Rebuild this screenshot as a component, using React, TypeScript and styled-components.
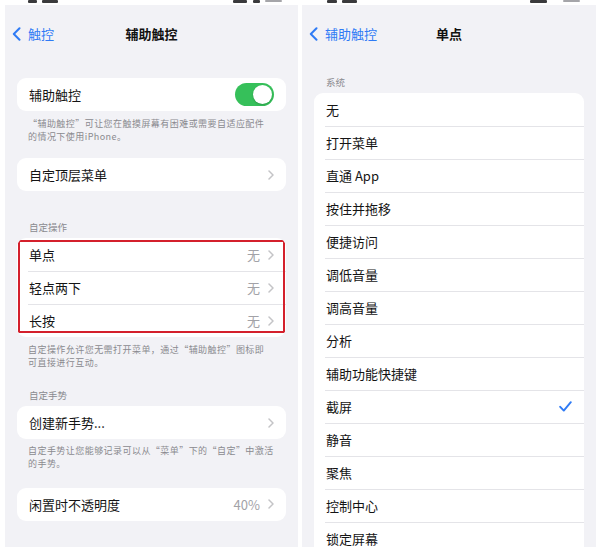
import React from 'react';
import styled, { createGlobalStyle } from 'styled-components';

const Global = createGlobalStyle`
  html, body { margin: 0; padding: 0; background: #ffffff; }
  body { font-family: "Noto Sans CJK SC", "Noto Sans", sans-serif; -webkit-font-smoothing: antialiased; }
`;

const BLUE = '#2f7bf5';

const Page = styled.div`
  width: 600px;
  height: 551px;
  box-sizing: border-box;
  padding-left: 5px;
  display: flex;
  gap: 4px;
  overflow: hidden;
`;

const Column = styled.div<{ $w: number }>`
  width: ${(p) => p.$w}px;
  height: 547px;
  display: flex;
  flex-direction: column;
`;

const StatusStrip = styled.div`
  height: 5px;
  flex: none;
  display: flex;
  align-items: flex-start;
  overflow: hidden;
`;

const Mark = styled.span<{ $ml: number; $w: number; $h?: number; $light?: boolean }>`
  display: block;
  margin-left: ${(p) => p.$ml}px;
  width: ${(p) => p.$w}px;
  height: ${(p) => p.$h ?? 2.5}px;
  border-radius: 1px;
  background: ${(p) => (p.$light ? '#a5a5a9' : '#3a3a3c')};
`;

const Panel = styled.div`
  flex: 1;
  background: #f2f2f6;
  display: flex;
  flex-direction: column;
  overflow: hidden;
`;

const NavBar = styled.div`
  height: 58px;
  flex: none;
  display: grid;
  grid-template-columns: 1fr auto 1fr;
  align-items: center;
  padding: 0 7px;
`;

const Back = styled.div`
  display: flex;
  align-items: center;
  gap: 7px;
  color: ${BLUE};
  font-size: 13px;
  line-height: 16px;
`;

const Title = styled.div`
  font-size: 13px;
  font-weight: 700;
  color: #111;
  line-height: 16px;
`;

const Body = styled.div`
  padding: 0 12px;
  display: flex;
  flex-direction: column;
`;

const SectionHeader = styled.div<{ $mt: number }>`
  margin-top: ${(p) => p.$mt}px;
  margin-bottom: 5px;
  padding-left: 12px;
  font-size: 9.5px;
  line-height: 12px;
  color: #8a8a8f;
`;

const Card = styled.div<{ $mt?: number; $highlight?: boolean }>`
  position: relative;
  margin-top: ${(p) => p.$mt ?? 0}px;
  background: #ffffff;
  border-radius: 9px;
  overflow: hidden;
  ${(p) =>
    p.$highlight &&
    `
    &::after {
      content: '';
      position: absolute;
      top: 2px; left: 1px; right: 1px; bottom: 4px;
      border: 2px solid #d4202c;
      border-radius: 1px;
      pointer-events: none;
    }
  `}
`;

const Row = styled.div`
  position: relative;
  height: 33px;
  display: flex;
  align-items: center;
  padding: 0 12px 0 12px;
  font-size: 13px;
  color: #141414;
  & + &::before {
    content: '';
    position: absolute;
    top: 0;
    left: 11px;
    right: 0;
    height: 1px;
    background: #e4e4e8;
  }
`;

const Label = styled.span`
  flex: 1;
  white-space: nowrap;
`;

const Value = styled.span`
  color: #a2a2a7;
  font-size: 13px;
  margin-right: 8px;
`;

const Footer = styled.div<{ $pt?: number }>`
  padding: ${(p) => p.$pt ?? 6}px 8px 0 11px;
  display: flex;
  flex-direction: column;
  color: #8a8a8f;
`;

const FooterLine = styled.span`
  display: block;
  font-size: 9px;
  letter-spacing: 0.45px;
  line-height: 13.1px;
  white-space: nowrap;
`;

const Toggle = styled.div`
  width: 39px;
  height: 23px;
  border-radius: 12px;
  background: #36c05a;
  display: flex;
  align-items: center;
  justify-content: flex-end;
  padding: 0 2px;
  box-sizing: border-box;
`;

const Knob = styled.div`
  width: 19px;
  height: 19px;
  border-radius: 50%;
  background: #fff;
  box-shadow: 0 1px 2px rgba(0, 0, 0, 0.2);
`;

const Chevron = () => (
  <svg width="6" height="10" viewBox="0 0 6 10" fill="none">
    <path d="M1 1l4 4-4 4" stroke="#c4c4c7" strokeWidth="1.5" strokeLinecap="round" strokeLinejoin="round" />
  </svg>
);

const BackChevron = () => (
  <svg width="9" height="14" viewBox="0 0 9 14" fill="none">
    <path d="M7.5 1.2L1.8 7l5.7 5.8" stroke={BLUE} strokeWidth="2" strokeLinecap="round" strokeLinejoin="round" />
  </svg>
);

const Check = () => (
  <svg width="13" height="11" viewBox="0 0 13 11" fill="none">
    <path d="M1.2 5.8L4.8 9.6L11.8 1.2" stroke={BLUE} strokeWidth="1.9" strokeLinecap="round" strokeLinejoin="round" />
  </svg>
);

const LinkRow = ({ label, value }: { label: string; value?: string }) => (
  <Row>
    <Label>{label}</Label>
    {value && <Value>{value}</Value>}
    <Chevron />
  </Row>
);

const FooterText = ({ lines, pt }: { lines: string[]; pt?: number }) => (
  <Footer $pt={pt}>
    {lines.map((l) => (
      <FooterLine key={l}>{l}</FooterLine>
    ))}
  </Footer>
);

const systemItems = [
  '无',
  '打开菜单',
  '直通 App',
  '按住并拖移',
  '便捷访问',
  '调低音量',
  '调高音量',
  '分析',
  '辅助功能快捷键',
  '截屏',
  '静音',
  '聚焦',
  '控制中心',
  '锁定屏幕',
];

export default function App() {
  return (
    <>
      <Global />
      <Page>
        <Column $w={293}>
          <StatusStrip>
            <Mark $ml={23} $w={9} />
            <Mark $ml={5} $w={16} />
            <Mark $ml={175} $w={14} />
            <Mark $ml={6} $w={7} />
            <Mark $ml={5} $w={17} $h={2} $light />
          </StatusStrip>
          <Panel>
            <NavBar>
              <Back>
                <BackChevron />
                触控
              </Back>
              <Title>辅助触控</Title>
              <span />
            </NavBar>
            <Body>
              <Card $mt={15}>
                <Row>
                  <Label>辅助触控</Label>
                  <Toggle>
                    <Knob />
                  </Toggle>
                </Row>
              </Card>
              <FooterText pt={6} lines={['“辅助触控”可让您在触摸屏幕有困难或需要自适应配件', '的情况下使用iPhone。']} />
              <Card $mt={15}>
                <LinkRow label="自定顶层菜单" />
              </Card>
              <SectionHeader $mt={30}>自定操作</SectionHeader>
              <Card $highlight>
                <LinkRow label="单点" value="无" />
                <LinkRow label="轻点两下" value="无" />
                <LinkRow label="长按" value="无" />
              </Card>
              <FooterText pt={6} lines={['自定操作允许您无需打开菜单，通过“辅助触控”图标即', '可直接进行互动。']} />
              <SectionHeader $mt={20}>自定手势</SectionHeader>
              <Card>
                <LinkRow label="创建新手势..." />
              </Card>
              <FooterText pt={5} lines={['自定手势让您能够记录可以从“菜单”下的“自定”中激活', '的手势。']} />
              <Card $mt={17}>
                <LinkRow label="闲置时不透明度" value="40%" />
              </Card>
            </Body>
          </Panel>
        </Column>
        <Column $w={294}>
          <StatusStrip>
            <Mark $ml={25} $w={10} />
            <Mark $ml={5} $w={15} />
            <Mark $ml={173} $w={17} />
            <Mark $ml={16} $w={17} $h={2} $light />
          </StatusStrip>
          <Panel>
            <NavBar>
              <Back>
                <BackChevron />
                辅助触控
              </Back>
              <Title>单点</Title>
              <span />
            </NavBar>
            <Body>
              <SectionHeader $mt={13}>系统</SectionHeader>
              <Card>
                {systemItems.map((item) => (
                  <Row key={item}>
                    <Label>{item}</Label>
                    {item === '截屏' && <Check />}
                  </Row>
                ))}
              </Card>
            </Body>
          </Panel>
        </Column>
      </Page>
    </>
  );
}
